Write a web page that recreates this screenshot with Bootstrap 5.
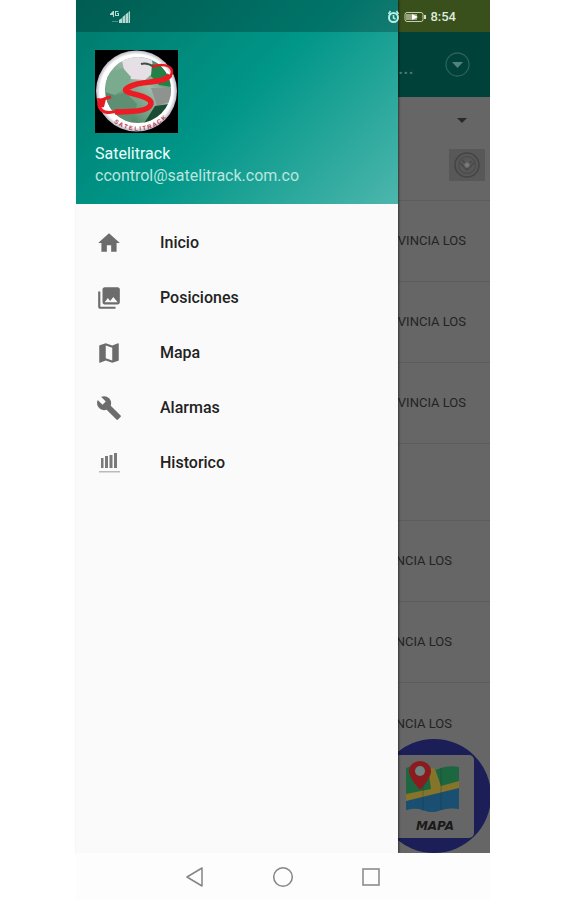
<!DOCTYPE html>
<html lang="es">
<head>
<meta charset="utf-8">
<meta name="viewport" content="width=device-width, initial-scale=1">
<title>Satelitrack</title>
<link href="https://cdn.jsdelivr.net/npm/bootstrap@5.3.0/dist/css/bootstrap.min.css" rel="stylesheet">
<style>
body{font-family:Roboto,"Liberation Sans",sans-serif;background:#fff;padding:0 74px 0 76px}
svg{display:block}
.statusbar{height:32px;padding:1px 34px 0;color:#dcebdc;font-size:13px;font-weight:500;z-index:3;pointer-events:none}
.drawer{flex:0 0 322px;background:#fafafa;z-index:2;box-shadow:1px 0 2px rgba(0,0,0,.5)}
.drawer-head{height:204px;padding:50px 19px 0;background:linear-gradient(135deg,#00796b,#009688 50%,#4db6ac)}
.scrim{height:32px;background:rgba(0,0,0,.23)}
.account-name{font-size:16px;line-height:22px;margin-top:10px;color:#e8fffb}
.account-mail{font-size:16px;line-height:22px;color:#b8e6df}
.menu{padding-top:11px}
.menu-link{height:55px;padding-left:20px;gap:38px;color:#222;font-size:16px;font-weight:500;text-decoration:none}
.menu-link svg{fill:#6c6c6c}
.behind{background:#666;color:#232323;font-size:13px}
.strip{height:32px;background:#39501c}
.toolbar{height:65px;background:#004139;color:#4b827b;padding-right:20px}
.filters{height:104px;padding:18px 5px 0 0;border-bottom:1px solid #5c5c5c}
.pin-button{width:36px;height:32px;background:#585858}
.place{height:81px;padding-right:24px;border-bottom:1px solid #5c5c5c;white-space:nowrap}
.place.blank{height:77px}
.place.far{padding-right:38px}
.fab{right:-1px;bottom:0;width:114px;height:114px}
.softkeys{height:47px;padding:0 108px;background:#fdfdfd;z-index:3}
</style>
</head>
<body>
<div class="d-flex flex-column min-vh-100 position-relative">
  <div class="statusbar position-absolute top-0 start-0 w-100 d-flex align-items-center justify-content-between">
    <svg width="22" height="14" viewBox="0 0 22 14" fill="#b6d9d2" role="img" aria-label="Señal"><path d="M3 1 0 4v1h3v2h1V1zm5 0H5v5h4V3H7v1h1v1H6V2h3z"/><path d="M9 13v-3l3-2v5zM12.500 13V7L15 5v8zM15.500 13V4.500L18 2.500V13zM18.500 13V2L20 1v12z"/><path d="M2 11h6v1H2z" opacity=".4"/></svg>
    <div class="d-flex align-items-center gap-1">
      <svg width="13" height="14" viewBox="0 0 12 14" fill="none" stroke="#b9efe4" stroke-width="2" role="img" aria-label="Alarma"><circle cx="6" cy="7.500" r="4.500"/><path d="M6 5v3l2 1M1 4l2-3M11 4 9 1" stroke-width="1.500"/></svg>
      <svg width="22" height="12" viewBox="0 0 22 12" role="img" aria-label="Batería"><rect x="1" y="1.500" width="18" height="9" rx="2" fill="none" stroke="#c5cfae"/><path d="M2 3h11v6H2z" fill="#99a47c"/><path d="m8 3 6 3-6 3z" fill="#fff"/><path d="M20 4h2v4h-2z" fill="#d6dfc5"/></svg>
      <span>8:54</span>
    </div>
  </div>
  <div class="d-flex flex-grow-1">
    <aside class="drawer position-relative">
      <header class="drawer-head position-relative">
        <div class="scrim position-absolute top-0 start-0 w-100"></div>
        <svg width="83" height="83" viewBox="0 0 83 83" role="img" aria-label="Logo Satelitrack">
          <defs>
            <linearGradient id="globe" x1="0" y1="1" x2="1" y2="0"><stop stop-color="#24543c"/><stop offset=".35" stop-color="#6a9c7f"/><stop offset=".6" stop-color="#9fb9a8"/><stop offset="1" stop-color="#17663b"/></linearGradient>
            <radialGradient id="rim"><stop offset=".9" stop-color="#fff"/><stop offset="1" stop-color="#b9b4c3"/></radialGradient>
            <clipPath id="ball"><circle cx="43" cy="40" r="33"/></clipPath>
            <path id="arc" d="M13 66.500A38.500 38.500 0 0 0 79 55"/>
          </defs>
          <path d="M0 0h83v83H0z"/>
          <circle cx="41.500" cy="41" r="40.500" fill="url(#rim)"/>
          <g clip-path="url(#ball)">
            <path d="M9 6h70v70H9z" fill="url(#globe)"/>
            <path d="M26 5h30l3 17-9 8-14-1-7-9z" fill="#e6dfe5"/>
            <path d="m12 24 16-6 8 9-4 10-12 8-10-3z" fill="#7bab8f"/>
            <path d="m57 14 13 3 8 20-14-2-8-9z" fill="#238047"/>
            <path d="m56 38 22 0-4 14-12 4z" fill="#8f9390"/>
            <path d="m12 50 18-8 12 12-6 20-18-6z" fill="#5f8f72"/>
            <path d="m60 56 14-2-10 16-16 5z" fill="#1d4c35"/>
          </g>
          <path d="M46 14q6-2 13 3" fill="none" stroke="#375346" stroke-width="2"/>
          <path d="M57 17C66 13 77 15 77 22 76 31 62 31 52 32" fill="none" stroke="#e51a23" stroke-width="2.500"/>
          <path d="M75 25C68 35 48 29 34 37 19 44 58 44 56 54 53 63 32 61 20 62" fill="none" stroke="#ed1c24" stroke-width="5.500"/>
          <path d="M24 60C13 65 5 62 4 55 3 50 11 48 16 47" fill="none" stroke="#ed1c24" stroke-width="3"/>
          <path d="m2 48 9 1-2 8-6 1z" fill="#e51a23"/>
          <text font-family="Liberation Sans" font-size="6" font-weight="700" fill="#b9364a"><textPath href="#arc" startOffset="8">S A T E L I T R A C K</textPath></text>
        </svg>
        <div class="account-name">Satelitrack</div>
        <div class="account-mail">ccontrol@satelitrack.com.co</div>
      </header>
      <nav class="menu d-flex flex-column">
        <a class="menu-link d-flex align-items-center" href="#inicio"><svg width="26" height="26" viewBox="0 0 24 24"><path d="M10 20v-6h4v6h5v-8h3L12 3 2 12h3v8z"/></svg>Inicio</a>
        <a class="menu-link d-flex align-items-center" href="#posiciones"><svg width="26" height="26" viewBox="0 0 24 24"><path d="M22 16V4c0-1.100-.9-2-2-2H8c-1.100 0-2 .9-2 2v12c0 1.100.9 2 2 2h12c1.100 0 2-.9 2-2zm-11-4 2.030 2.710L16 11l4 5H8l3-4zM2 6v14c0 1.100.9 2 2 2h14v-2H4V6H2z"/></svg>Posiciones</a>
        <a class="menu-link d-flex align-items-center" href="#mapa"><svg width="26" height="26" viewBox="0 0 24 24"><path d="m20.500 3-.16.030L15 5.100 9 3 3.360 4.900c-.21.070-.36.250-.36.480V20.500c0 .28.220.5.500.5l.16-.030L9 18.900l6 2.100 5.640-1.900c.21-.070.36-.250.36-.480V3.500c0-.28-.22-.5-.5-.5zM15 19l-6-2.110V5l6 2.110V19z"/></svg>Mapa</a>
        <a class="menu-link d-flex align-items-center" href="#alarmas"><svg width="26" height="26" viewBox="0 0 24 24"><path d="m22.700 19-9.100-9.100c.9-2.300.4-5-1.500-6.900-2-2-5-2.400-7.400-1.300L9 6 6 9 1.600 4.700C.4 7.100.9 10.100 2.900 12.100c1.900 1.900 4.600 2.400 6.900 1.500l9.100 9.100c.4.400 1 .4 1.400 0l2.300-2.300c.5-.4.5-1.100.1-1.400z"/></svg>Alarmas</a>
        <a class="menu-link d-flex align-items-center" href="#historico"><svg width="26" height="26" viewBox="0 0 26 26"><path d="M5 8h2.500v10H5zM9 6h3v12H9zM13.500 5h3v13h-3zM18 3h3v15h-3z" opacity=".9"/><path d="M3 21h21v1.500H3z" opacity=".45"/></svg>Historico</a>
      </nav>
    </aside>
    <main class="behind flex-grow-1 position-relative overflow-hidden">
      <div class="strip"></div>
      <div class="toolbar d-flex align-items-center justify-content-between">
        <span class="fs-5 pt-1">...</span>
        <svg width="25" height="25" viewBox="0 0 25 25" role="img" aria-label="Opciones"><circle cx="12.500" cy="12.500" r="11.500" fill="none" stroke="#2c625b" stroke-width="1.300"/><path d="M7 10h11l-5.500 6z" fill="#55817b"/></svg>
      </div>
      <div class="filters d-flex flex-column align-items-end">
        <svg class="me-3" width="14" height="10" viewBox="0 0 14 10"><path d="M2 3h10L7 8z" fill="#292929"/></svg>
        <button class="pin-button btn rounded-0 border-0 p-0 mt-4 d-flex align-items-center justify-content-center" aria-label="Ubicar"><svg width="28" height="28" viewBox="0 0 28 28" fill="none" stroke="#444" stroke-width="1.500"><circle cx="14" cy="14" r="12"/><circle cx="14" cy="14" r="8.500" stroke="#4d4d4d"/><path d="m7 12 7 7 8-8M9 9l5 5 5-4" stroke="#484848"/><circle cx="14" cy="14" r="2" fill="#808080" stroke="#707070"/></svg></button>
      </div>
      <div class="place d-flex align-items-center justify-content-end">VINCIA LOS</div>
      <div class="place d-flex align-items-center justify-content-end">VINCIA LOS</div>
      <div class="place d-flex align-items-center justify-content-end">VINCIA LOS</div>
      <div class="place blank"></div>
      <div class="place far d-flex align-items-center justify-content-end">NCIA LOS</div>
      <div class="place far d-flex align-items-center justify-content-end">NCIA LOS</div>
      <div class="place far border-0 d-flex align-items-center justify-content-end">NCIA LOS</div>
      <button class="fab btn border-0 p-0 position-absolute" aria-label="Mapa">
        <svg width="114" height="114" viewBox="0 0 114 114">
          <circle cx="57" cy="57" r="57" fill="#1b1e57"/>
          <rect x="14" y="16" width="83" height="83" rx="5" fill="#666"/>
          <path d="M29 29q8-4 17 0 9 4 18 0 8-3 18-1v42q-9-2-18 1-9 4-18 0-8-3-17 0z" fill="#1c673f"/>
          <path d="M29 60l53-15v25q-9-2-18 1-9 4-18 0-8-3-17 0z" fill="#1b4f72"/>
          <path d="m29 55 25-5-3-22 7 2 6 17 18-5v7L29 62z" fill="#86742a"/>
          <path d="M46 30v42M64 29v42" stroke="#123" stroke-opacity=".25" fill="none"/>
          <path d="M43 51C36 43 32 37 32 32a11 10 0 0 1 22 0c0 5-4 11-11 19z" fill="#8c1b20"/>
          <circle cx="43" cy="32" r="5" fill="#6c8580"/>
          <text x="58" y="91" text-anchor="middle" font-family="DejaVu Sans,sans-serif" font-size="12" font-style="italic" font-weight="700" fill="#1a1a1a">MAPA</text>
        </svg>
      </button>
    </main>
  </div>
  <nav class="softkeys position-relative d-flex align-items-center justify-content-between" aria-label="Sistema">
    <button class="btn border-0 p-0" aria-label="Atrás"><svg width="22" height="22" viewBox="0 0 22 22" fill="none" stroke="#858585" stroke-width="1.500"><path d="M18 2v18L3 11z" stroke-linejoin="round"/></svg></button>
    <button class="btn border-0 p-0" aria-label="Inicio"><svg width="22" height="22" viewBox="0 0 22 22" fill="none" stroke="#858585" stroke-width="1.500"><circle cx="11" cy="11" r="9.300"/></svg></button>
    <button class="btn border-0 p-0" aria-label="Recientes"><svg width="22" height="22" viewBox="0 0 22 22" fill="none" stroke="#858585" stroke-width="1.500"><rect x="3" y="3" width="16" height="16"/></svg></button>
  </nav>
</div>
<script src="https://cdn.jsdelivr.net/npm/bootstrap@5.3.0/dist/js/bootstrap.bundle.min.js"></script>
</body>
</html>
